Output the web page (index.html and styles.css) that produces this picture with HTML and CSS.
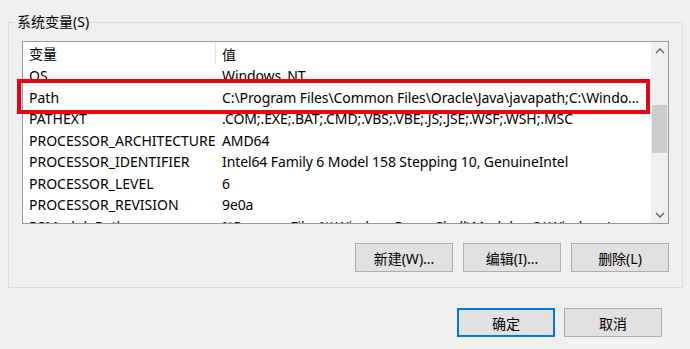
FILE: index.html
```html
<!DOCTYPE html>
<html lang="zh-CN">
<head>
<meta charset="utf-8">
<title>系统变量</title>
<link rel="stylesheet" href="styles.css">
</head>
<body>
<div class="dialog">
  <div class="group">
    <div class="group-title">系统变量(S)</div>
    <div class="listbox">
      <div class="list-content">
        <div class="row header">
          <div class="cell c1 hcell">变量</div>
          <div class="cell c2">值</div>
        </div>
        <div class="rows">
          <div class="row"><div class="cell c1">OS</div><div class="cell c2">Windows_NT</div></div>
          <div class="row"><div class="cell c1">Path</div><div class="cell c2">C:\Program Files\Common Files\Oracle\Java\javapath;C:\Windo...</div></div>
          <div class="row"><div class="cell c1">PATHEXT</div><div class="cell c2">.COM;.EXE;.BAT;.CMD;.VBS;.VBE;.JS;.JSE;.WSF;.WSH;.MSC</div></div>
          <div class="row"><div class="cell c1">PROCESSOR_ARCHITECTURE</div><div class="cell c2">AMD64</div></div>
          <div class="row"><div class="cell c1">PROCESSOR_IDENTIFIER</div><div class="cell c2">Intel64 Family 6 Model 158 Stepping 10, GenuineIntel</div></div>
          <div class="row"><div class="cell c1">PROCESSOR_LEVEL</div><div class="cell c2">6</div></div>
          <div class="row"><div class="cell c1">PROCESSOR_REVISION</div><div class="cell c2">9e0a</div></div>
          <div class="row"><div class="cell c1">PSModulePath</div><div class="cell c2">%ProgramFiles%\WindowsPowerShell\Modules;C:\Windows\...</div></div>
        </div>
      </div>
      <div class="scrollbar">
        <div class="arrow">
          <svg width="10" height="6" viewBox="0 0 10 6"><path d="M1 5 L5 1 L9 5" fill="none" stroke="#606060" stroke-width="1.3"/></svg>
        </div>
        <div class="track"><div class="thumb"></div></div>
        <div class="arrow">
          <svg width="10" height="6" viewBox="0 0 10 6"><path d="M1 1 L5 5 L9 1" fill="none" stroke="#606060" stroke-width="1.3"/></svg>
        </div>
      </div>
    </div>
    <div class="btn-row">
      <button class="btn">新建(W)...</button>
      <button class="btn">编辑(I)...</button>
      <button class="btn">删除(L)</button>
    </div>
    <div class="highlight"></div>
  </div>
  <div class="footer">
    <button class="btn btn-default">确定</button>
    <button class="btn">取消</button>
  </div>
</div>
</body>
</html>
```

FILE: styles.css
```css
html, body {
  margin: 0;
  padding: 0;
}
body {
  background: #f0f0f0;
  font-family: "Noto Sans", "Noto Sans CJK SC", sans-serif;
  font-size: 14px;
  color: #000;
  width: 690px;
  height: 349px;
  overflow: hidden;
}
.dialog {
  padding-top: 22px;
}
.group {
  position: relative;
  margin: 0 7px 0 8px;
  border: 1px solid #dcdcdc;
  height: 266px;
  box-sizing: border-box;
  padding: 0 0 0 13px;
}
.group-title {
  margin-top: -10px;
  margin-left: -7px;
  padding: 0 2px;
  width: fit-content;
  background: #f0f0f0;
  line-height: 18px;
  color: #000;
}
.listbox {
  margin-top: 10px;
  width: 647px;
  height: 183px;
  box-sizing: border-box;
  border: 1px solid #9a9a9a;
  background: #fff;
  display: flex;
  overflow: hidden;
}
.list-content {
  flex: 1;
  overflow: hidden;
  display: flex;
  flex-direction: column;
}
.row {
  display: flex;
  height: 21.5px;
  align-items: center;
  white-space: nowrap;
  flex: none;
}
.row.header {
  height: 23px;
}
.rows {
  overflow: hidden;
}
.cell {
  padding-left: 6px;
  box-sizing: border-box;
  overflow: hidden;
}
.c1 {
  width: 193px;
  flex: none;
}
.hcell {
  border-right: 1px solid #e5e5e5;
  height: 23px;
  line-height: 23px;
}
.c2 {
  flex: 1;
  letter-spacing: -0.1px;
}
.scrollbar {
  width: 17px;
  flex: none;
  background: #f0f0f0;
  display: flex;
  flex-direction: column;
}
.arrow {
  height: 17px;
  display: flex;
  align-items: center;
  justify-content: center;
  flex: none;
}
.track {
  flex: 1;
  padding-top: 46px;
}
.thumb {
  margin: 0 1px;
  height: 48px;
  background: #cdcdcd;
}
.btn-row {
  display: flex;
  justify-content: flex-end;
  gap: 10px;
  width: 647px;
  margin-top: 19px;
}
.btn {
  width: 98px;
  height: 29px;
  background: #e1e1e1;
  border: 1px solid #adadad;
  font-family: "Noto Sans", "Noto Sans CJK SC", sans-serif;
  font-size: 14px;
  color: #000;
  padding: 0;
  box-sizing: border-box;
}
.btn-default {
  border: 2px solid #0078d7;
}
.footer {
  display: flex;
  justify-content: flex-end;
  gap: 9px;
  margin-top: 20px;
  padding-right: 28px;
}
.highlight {
  position: absolute;
  left: 8px;
  top: 56px;
  width: 633px;
  height: 35px;
  border: 4px solid #e60012;
  box-sizing: border-box;
  pointer-events: none;
}
```
